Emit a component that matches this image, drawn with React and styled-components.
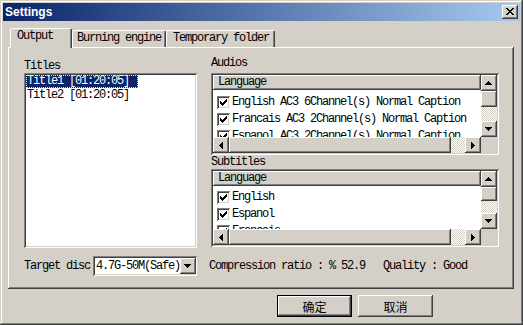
import React from 'react';
import styled, { createGlobalStyle, css } from 'styled-components';

const FACE = '#d4d0c8';
const SHADOW = '#808080';
const DARK = '#404040';

const raised = css`
  background: ${FACE};
  box-shadow: inset -1px -1px ${DARK}, inset 1px 1px #fff, inset -2px -2px ${SHADOW},
    inset 2px 2px ${FACE};
`;

const sunken = css`
  box-shadow: inset 1px 1px ${SHADOW}, inset -1px -1px #fff, inset 2px 2px ${DARK},
    inset -2px -2px ${FACE};
`;

const dither = css`
  background-image: repeating-conic-gradient(#fff 0% 25%, ${FACE} 0% 50%);
  background-size: 2px 2px;
`;

const GlobalStyle = createGlobalStyle`
  html, body {
    margin: 0;
    padding: 0;
    background: ${FACE};
    overflow: hidden;
  }
`;

const Window = styled.div`
  box-sizing: border-box;
  width: 523px;
  height: 325px;
  padding: 3px;
  display: flex;
  flex-direction: column;
  background: ${FACE};
  box-shadow: inset -1px -1px ${DARK}, inset 1px 1px ${FACE}, inset -2px -2px ${SHADOW},
    inset 2px 2px #fff;
  font-family: "Liberation Mono", "Courier New", monospace;
  font-size: 12px;
  line-height: 13px;
  letter-spacing: -1.2px;
  color: #000;
`;

const TitleBar = styled.div`
  flex: none;
  height: 18px;
  display: flex;
  align-items: center;
  justify-content: space-between;
  padding: 0 2px;
  background: linear-gradient(to right, #0a246a, #a6caf0);
`;

const Caption = styled.span`
  font: bold 12px "Liberation Sans", Arial, sans-serif;
  letter-spacing: 0;
  color: #fff;
`;

const CloseButton = styled.div`
  ${raised};
  width: 16px;
  height: 14px;
  display: flex;
  align-items: center;
  justify-content: center;
`;

const Body = styled.div`
  flex: 1;
  display: flex;
  flex-direction: column;
  padding: 7px 6px 0 5px;
`;

const TabStrip = styled.div`
  display: flex;
  align-items: flex-end;
  height: 19px;
  padding-left: 2px;
`;

const Tab = styled.div`
  box-sizing: border-box;
  position: relative;
  z-index: ${p => (p.$active ? 1 : 0)};
  width: ${p => p.$width}px;
  height: ${p => (p.$active ? 20 : 17)}px;
  margin-bottom: ${p => (p.$active ? -1 : 0)}px;
  padding: 1px 0 0 ${p => p.$indent}px;
  background: ${FACE};
  border: 1px solid #fff;
  border-bottom: none;
  border-right: 1px solid ${DARK};
  border-radius: 2px 2px 0 0;
  box-shadow: inset -1px 0 ${SHADOW};
  white-space: nowrap;
`;

const Panel = styled.div`
  ${raised};
  box-sizing: border-box;
  height: 242px;
  padding: 13px 15px 0 16px;
  display: grid;
  grid-template-columns: 173px 288px;
  column-gap: 14px;
  align-content: start;
`;

const Column = styled.div`
  display: flex;
  flex-direction: column;
  margin-top: ${p => p.$shift || 0}px;
`;

const GroupLabel = styled.div`
  box-sizing: border-box;
  height: ${p => p.$h}px;
  padding-top: ${p => p.$pt || 0}px;
  white-space: nowrap;
`;

const TitleList = styled.div`
  ${sunken};
  box-sizing: border-box;
  height: 175px;
  padding: 2px;
  background: #fff;
`;

const TitleItem = styled.div`
  width: fit-content;
  height: 13px;
  margin-bottom: 1px;
  padding: 0 9px 0 1px;
  white-space: nowrap;
  ${p =>
    p.$selected &&
    css`
      background: #0a246a;
      color: #fff;
      outline: 1px dotted #e8e8c0;
      outline-offset: -1px;
    `}
`;

const ListView = styled.div`
  ${sunken};
  box-sizing: border-box;
  height: ${p => p.$h}px;
  padding: 2px;
  background: #fff;
  display: grid;
  grid-template-columns: 1fr 16px;
  grid-template-rows: 1fr 16px;
  overflow: hidden;
`;

const ListContent = styled.div`
  overflow: hidden;
`;

const Header = styled.div`
  ${raised};
  box-sizing: border-box;
  height: 15px;
  padding: 1px 0 0 5px;
`;

const Rows = styled.div`
  padding-top: ${p => p.$pt}px;
`;

const Row = styled.div`
  display: flex;
  align-items: center;
  gap: 2px;
  height: 17px;
  padding-left: 4px;
  white-space: nowrap;
`;

const CheckBox = styled.span`
  ${sunken};
  flex: none;
  width: 13px;
  height: 13px;
  background: #fff;
  display: flex;
`;

const VScroll = styled.div`
  display: flex;
  flex-direction: column;
`;

const HScroll = styled.div`
  display: flex;
`;

const ArrowButton = styled.div`
  ${raised};
  flex: none;
  width: 16px;
  height: 16px;
  display: flex;
`;

const Thumb = styled.div`
  ${raised};
  flex: ${p => (p.$size ? 'none' : 1)};
  ${p => (p.$vertical ? `height: ${p.$size}px;` : '')}
`;

const Track = styled.div`
  ${dither};
  flex: ${p => (p.$size ? 'none' : 1)};
  ${p => (p.$size ? `width: ${p.$size}px;` : '')}
`;

const Corner = styled.div`
  background: ${FACE};
`;

const BottomRow = styled.div`
  grid-column: 1 / -1;
  display: flex;
  align-items: center;
  height: 20px;
  margin-top: 8px;
  white-space: nowrap;
`;

const Combo = styled.div`
  ${sunken};
  box-sizing: border-box;
  width: 104px;
  height: 20px;
  margin-left: 3px;
  padding: 2px;
  background: #fff;
  display: flex;
  align-items: center;
`;

const ComboText = styled.span`
  flex: 1;
  padding-left: 1px;
`;

const Stat = styled.span`
  margin-left: ${p => p.$gap}px;
`;

const ButtonRow = styled.div`
  display: flex;
  justify-content: flex-end;
  gap: 6px;
  padding: 6px 81px 0 0;
`;

const PushButton = styled.div`
  box-sizing: border-box;
  width: 75px;
  height: 22px;
  display: flex;
  align-items: center;
  justify-content: center;
  font: 12px "Noto Sans CJK SC", sans-serif;
  letter-spacing: 0;
  ${p =>
    p.$default
      ? css`
          background: ${FACE};
          border: 1px solid #000;
          box-shadow: inset -1px -1px ${DARK}, inset 1px 1px #fff, inset -2px -2px ${SHADOW};
        `
      : raised}
`;

const rotations = { up: 0, down: 180, left: -90, right: 90 };

const Arrow = ({ dir }) => (
  <svg width="16" height="16" viewBox="0 0 16 16" shapeRendering="crispEdges">
    <path
      d="M7 6h1v1h1v1h1v1h1v1H4V9h1V8h1V7h1z"
      fill="#000"
      transform={`rotate(${rotations[dir]} 7.5 8)`}
    />
  </svg>
);

const pixels = (rows, ox, oy) =>
  rows.flatMap((line, y) =>
    line.split('').map((c, x) =>
      c === '#' ? <rect key={`${x}-${y}`} x={ox + x} y={oy + y} width="1" height="1" /> : null
    )
  );

const closeGlyph = [
  '##....##',
  '.##..##.',
  '..####..',
  '...##...',
  '..####..',
  '.##..##.',
  '##....##',
];

const checkGlyph = [
  '......#',
  '.....##',
  '#...###',
  '##.###.',
  '#####..',
  '.###...',
  '..#....',
];

const CloseIcon = () => (
  <svg width="16" height="14" viewBox="0 0 16 14" shapeRendering="crispEdges" fill="#000">
    {pixels(closeGlyph, 4, 3)}
  </svg>
);

const Check = () => (
  <CheckBox>
    <svg width="13" height="13" viewBox="0 0 13 13" shapeRendering="crispEdges" fill="#000">
      {pixels(checkGlyph, 3, 3)}
    </svg>
  </CheckBox>
);

const CheckList = ({ height, items, rowsTop, thumb }) => (
  <ListView $h={height}>
    <ListContent>
      <Header>Language</Header>
      <Rows $pt={rowsTop}>
        {items.map(item => (
          <Row key={item}>
            <Check />
            <span>{item}</span>
          </Row>
        ))}
      </Rows>
    </ListContent>
    <VScroll>
      <ArrowButton>
        <Arrow dir="up" />
      </ArrowButton>
      <Thumb $vertical $size={thumb} />
      <Track />
      <ArrowButton>
        <Arrow dir="down" />
      </ArrowButton>
    </VScroll>
    <HScroll>
      <ArrowButton>
        <Arrow dir="left" />
      </ArrowButton>
      <Thumb />
      <Track $size={14} />
      <ArrowButton>
        <Arrow dir="right" />
      </ArrowButton>
    </HScroll>
    <Corner />
  </ListView>
);

const audios = [
  'English AC3 6Channel(s) Normal Caption',
  'Francais AC3 2Channel(s) Normal Caption',
  'Espanol AC3 2Channel(s) Normal Caption',
];

const subtitles = ['English', 'Espanol', 'Francais'];

const App = () => (
  <>
    <GlobalStyle />
    <Window>
      <TitleBar>
        <Caption>Settings</Caption>
        <CloseButton>
          <CloseIcon />
        </CloseButton>
      </TitleBar>
      <Body>
        <TabStrip>
          <Tab $active $width={62} $indent={6}>Output</Tab>
          <Tab $width={94} $indent={4}>Burning engine</Tab>
          <Tab $width={109} $indent={6}>Temporary folder</Tab>
        </TabStrip>
        <Panel>
          <Column>
            <GroupLabel $h={13}>Titles</GroupLabel>
            <TitleList>
              <TitleItem $selected>Title1 [01:20:05]</TitleItem>
              <TitleItem>Title2 [01:20:05]</TitleItem>
            </TitleList>
          </Column>
          <Column $shift={-3}>
            <GroupLabel $h={16}>Audios</GroupLabel>
            <CheckList height={82} items={audios} rowsTop={4} thumb={16} />
            <GroupLabel $h={14} $pt={1}>Subtitles</GroupLabel>
            <CheckList height={78} items={subtitles} rowsTop={3} thumb={14} />
          </Column>
          <BottomRow>
            <span>Target disc</span>
            <Combo>
              <ComboText>4.7G-50M(Safe)</ComboText>
              <ArrowButton>
                <Arrow dir="down" />
              </ArrowButton>
            </Combo>
            <Stat $gap={12}>Compression ratio : % 52.9</Stat>
            <Stat $gap={18}>Quality : Good</Stat>
          </BottomRow>
        </Panel>
        <ButtonRow>
          <PushButton $default>确定</PushButton>
          <PushButton>取消</PushButton>
        </ButtonRow>
      </Body>
    </Window>
  </>
);

export default App;
